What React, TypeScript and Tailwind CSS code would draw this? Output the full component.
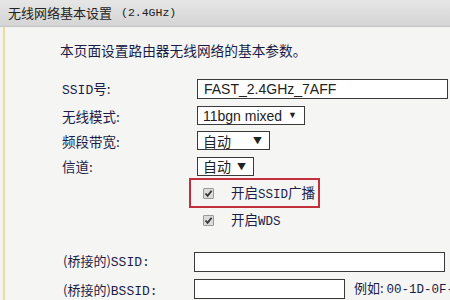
import React from 'react';

const cn = '"Noto Sans CJK SC", "Liberation Sans", sans-serif';
const mono = '"Liberation Mono", "Noto Sans CJK SC", monospace';
const arial = '"Liberation Sans", "Noto Sans CJK SC", sans-serif';

function Check() {
  return (
    <span className="inline-flex w-[11px] h-[11px] items-center justify-center border border-[#9a9a9a] bg-[#dcdcdc] rounded-[1px]">
      <svg width="9" height="9" viewBox="0 0 9 9">
        <path d="M1.5 4.5 L3.6 6.8 L7.6 1.8" fill="none" stroke="#333" strokeWidth="1.8" />
      </svg>
    </span>
  );
}

function Select({ value, width, font }: { value: string; width: string; font: string }) {
  return (
    <div
      className={`${width} h-[19px] bg-white border border-[#3a3a3a] flex items-center justify-between pl-[5px] pr-[7px] text-[14px] text-[#222]`}
      style={{ fontFamily: font }}
    >
      <span className="leading-none">{value}</span>
      <span className="text-[9px] leading-none">▼</span>
    </div>
  );
}

export default function App() {
  return (
    <div className="w-[450px] h-[300px] overflow-hidden bg-[#f3f3f1] text-[#1c1c48]" style={{ fontFamily: cn }}>
      <div className="h-[27px] bg-gradient-to-b from-[#e6e6e6] to-[#d4d4d4] border-b border-[#c4c4c4] flex items-center pl-[8px] text-[13px] text-[#222]">
        <span>无线网络基本设置</span>
        <span className="ml-[9px] text-[11.5px]" style={{ fontFamily: mono }}>(2.4GHz)</span>
      </div>
      <div className="ml-[3px] border-l-[2px] border-[#f0dc9c] h-[273px] bg-[#f5f5f3] pl-[55px]">
        <div className="pt-[14px] text-[13.7px] leading-[18px]">本页面设置路由器无线网络的基本参数。</div>

        <div className="mt-[19px] grid grid-cols-[137px_1fr] items-center gap-y-[5px] text-[13.5px]">
          <span className="pl-[2px]">
            <span className="text-[13px]" style={{ fontFamily: mono }}>SSID</span>号:
          </span>
          <div className="h-[20px] w-[251px] bg-white border border-[#3a3a3a] flex items-center pl-[6px] text-[14px] text-[#222]" style={{ fontFamily: arial }}>
            FAST_2.4GHz_7AFF
          </div>

          <span className="pl-[2px]">无线模式:</span>
          <Select value="11bgn mixed" width="w-[108px]" font={arial} />

          <span className="pl-[2px]">频段带宽:</span>
          <Select value="自动" width="w-[73px]" font={cn} />

          <span className="pl-[2px]">信道:</span>
          <Select value="自动" width="w-[57px]" font={cn} />
        </div>

        <div className="ml-[129px] mt-[2px] w-[131px] h-[30px] border-2 border-[#c2303c] flex items-center pl-[12px] text-[13.5px]">
          <Check />
          <span className="ml-[17px]">
            开启<span className="text-[12.5px]" style={{ fontFamily: mono }}>SSID</span>广播
          </span>
        </div>
        <div className="ml-[143px] mt-[3px] h-[18px] flex items-center text-[13.5px]">
          <Check />
          <span className="ml-[17px]">
            开启<span className="text-[12.5px]" style={{ fontFamily: mono }}>WDS</span>
          </span>
        </div>

        <div className="mt-[22px] grid grid-cols-[134px_1fr] items-center gap-y-[4px] text-[13px]">
          <span className="pl-[3px]">
            (桥接的)<span className="text-[13px]" style={{ fontFamily: mono }}>SSID:</span>
          </span>
          <div className="h-[20px] w-[251px] bg-white border border-[#3a3a3a]" />

          <span className="pl-[3px] pt-[3px]">
            (桥接的)<span className="text-[13px]" style={{ fontFamily: mono }}>BSSID:</span>
          </span>
          <div className="flex items-center">
            <div className="h-[20px] w-[151px] bg-white border border-[#3a3a3a]" />
            <span className="ml-[9px] whitespace-nowrap">
              例如: <span className="text-[12.5px]" style={{ fontFamily: mono }}>00-1D-0F-11-22-33</span>
            </span>
          </div>
        </div>
      </div>
    </div>
  );
}
